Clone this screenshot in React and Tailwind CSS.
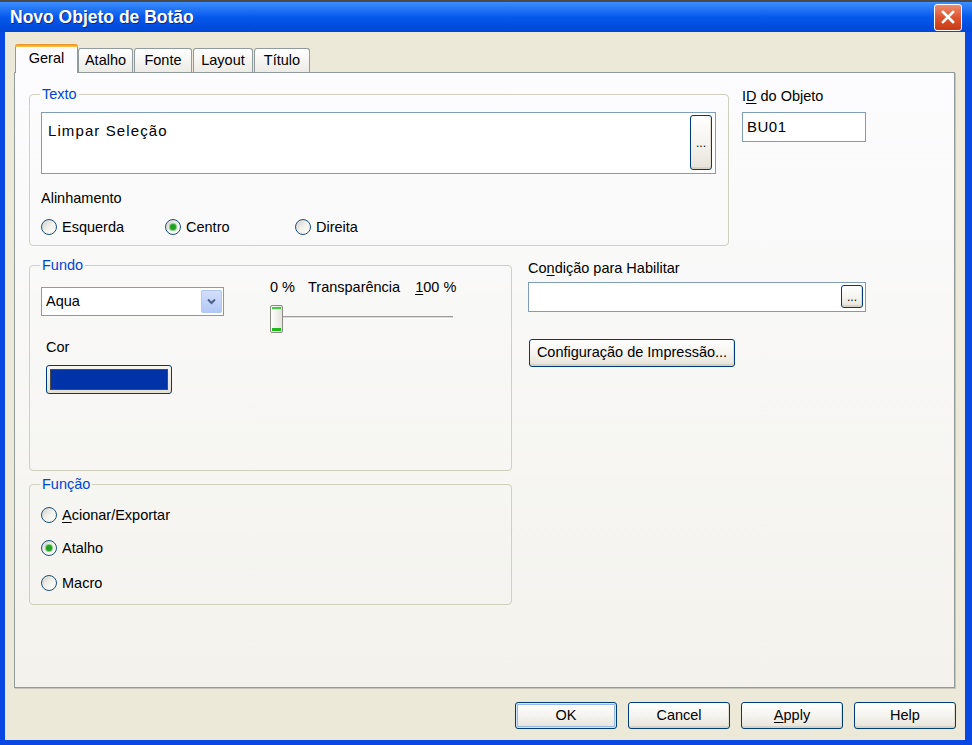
import React from "react";

function Radio({ checked }) {
  return (
    <span className="w-[16px] h-[16px] rounded-full border border-[#1C5180] bg-linear-to-br from-[#D4D1C8] via-[#F2F1EC] to-white flex items-center justify-center shrink-0">
      {checked && <span className="w-[6px] h-[6px] rounded-full bg-[#21A121] shadow-[0_0_0_1px_#7FD07F]" />}
    </span>
  );
}

function RadioItem({ checked, children, className = "" }) {
  return (
    <div className={`flex items-center gap-[5px] h-[16px] leading-[16px] ${className}`}>
      <Radio checked={checked} />
      <span>{children}</span>
    </div>
  );
}

function XPButton({ children, className = "", def = false }) {
  return (
    <div
      className={`flex items-center justify-center rounded-[3px] border border-[#003C74] bg-linear-to-b from-white via-[#F5F4EF] to-[#E6E3D9] text-black ${
        def
          ? "shadow-[inset_0_0_0_1px_#CEE7FF,inset_0_0_0_2px_#98B8EA]"
          : "shadow-[inset_0_-2px_0_#D8D2C6,inset_-1px_0_0_#E2DED3]"
      } ${className}`}
    >
      {children}
    </div>
  );
}

function Group({ label, className = "", children }) {
  return (
    <fieldset className={`border border-[#D0D0BF] rounded-[4px] ${className}`}>
      <legend className="ml-[-1px] px-[2px] leading-[16px] text-[#0046D5]">{label}</legend>
      {children}
    </fieldset>
  );
}

function Tab({ children, selected, className = "" }) {
  if (selected) {
    return (
      <div
        className={`relative z-10 mb-[-1px] h-[29px] flex items-center justify-center rounded-t-[3px] border-x border-[#919B9C] bg-[#FCFCFE] ${className}`}
      >
        <div className="absolute left-[-1px] right-[-1px] top-0 h-[3px] rounded-t-[3px] bg-linear-to-b from-[#E68B2C] to-[#FFC73C]" />
        <span className="mt-[1px]">{children}</span>
      </div>
    );
  }
  return (
    <div
      className={`h-[24px] flex items-center justify-center rounded-t-[3px] border border-b-0 border-[#919B9C] bg-linear-to-b from-white to-[#ECEBE5] ${className}`}
    >
      <span className="mt-[1px]">{children}</span>
    </div>
  );
}

export default function App() {
  return (
    <div className="w-[972px] h-[745px] bg-[#0A48E4] flex flex-col overflow-hidden font-['Liberation_Sans',Arial,sans-serif] text-[14.5px] text-black">
      {/* Title bar */}
      <div className="h-[32px] shrink-0 border-t-2 border-[#4A4A4A] bg-linear-to-b from-[#3C8DFD] via-[#0558EC] to-[#0047D6] flex items-center justify-between pl-[10px] pr-[10px]">
        <span className="text-white font-bold text-[17.5px] leading-[20px] [text-shadow:1px_1px_0_#0F2A8A]">
          Novo Objeto de Botão
        </span>
        <div className="w-[28px] h-[27px] rounded-[3px] border border-white bg-linear-to-b from-[#EB8B6D] via-[#DD5430] to-[#C83A12] flex items-center justify-center">
          <svg width="16" height="16" viewBox="0 0 16 16">
            <path d="M3 3 L13 13 M13 3 L3 13" stroke="white" strokeWidth="2.6" strokeLinecap="square" />
          </svg>
        </div>
      </div>

      {/* Body */}
      <div className="flex-1 flex flex-col bg-[#ECE9D8] ml-[5px] mr-[7px] mb-[5px]">
        {/* Tabs */}
        <div className="mt-[12px] h-[28px] pl-[10px] flex items-end">
          <Tab selected className="w-[63px]">Geral</Tab>
          <Tab className="w-[55px]">Atalho</Tab>
          <Tab className="w-[58px] ml-[1px]">Fonte</Tab>
          <Tab className="w-[60px] ml-[1px]">Layout</Tab>
          <Tab className="w-[56px] ml-[1px]">Título</Tab>
        </div>

        {/* Panel */}
        <div className="ml-[9px] w-[941px] h-[616px] border border-[#919B9C] bg-linear-to-b from-[#FCFCFE] to-[#F3F2EC] shadow-[1px_1px_0_#C8C6BA] flex flex-col">
          {/* Row 1 */}
          <div className="mt-[13px] pl-[14px] flex items-start">
            <Group label="Texto" className="w-[700px] h-[160px] px-[11px]">
              <div className="mt-[10px] h-[62px] w-[675px] border border-[#7F9DB9] bg-white flex justify-between">
                <span className="ml-[6px] mt-[9px] text-[15px] leading-[18px] tracking-[1.1px]">Limpar Seleção</span>
                <XPButton className="w-[22px] h-[55px] mt-[2px] mr-[3px] text-[12px] leading-[12px]">...</XPButton>
              </div>
              <div className="mt-[16px] leading-[16px] h-[16px]">Alinhamento</div>
              <div className="mt-[13px] flex">
                <RadioItem className="w-[124px]">Esquerda</RadioItem>
                <RadioItem checked className="w-[130px]">Centro</RadioItem>
                <RadioItem>Direita</RadioItem>
              </div>
            </Group>

            <div className="ml-[13px] flex flex-col">
              <div className="mt-[2px] h-[16px] leading-[16px]">
                I<span className="underline underline-offset-2">D</span> do Objeto
              </div>
              <div className="mt-[8px] w-[124px] h-[30px] border border-[#7F9DB9] bg-white flex items-center pl-[4px] text-[15px] tracking-[0.5px]">
                BU01
              </div>
            </div>
          </div>

          {/* Row 2 */}
          <div className="mt-[11px] pl-[14px] flex items-start">
            <div className="w-[483px] flex flex-col">
              <Group label="Fundo" className="h-[214px] px-[11px]">
                <div className="flex items-start">
                  <div className="mt-[14px] flex flex-col">
                    <div className="w-[183px] h-[29px] border border-[#7F9DB9] bg-white flex items-center justify-between">
                      <span className="ml-[4px]">Aqua</span>
                      <div className="w-[21px] h-[23px] mr-[1px] rounded-[2px] border border-[#B1C7F5] bg-linear-to-b from-[#D3DFFB] to-[#B3C8F7] flex items-center justify-center">
                        <svg width="11" height="11" viewBox="0 0 11 11">
                          <path d="M2 3.5 L5.5 7 L9 3.5" fill="none" stroke="#4D6185" strokeWidth="2" />
                        </svg>
                      </div>
                    </div>
                    <div className="mt-[23px] ml-[5px] h-[16px] leading-[16px]">Cor</div>
                    <div className="mt-[10px] ml-[5px] w-[126px] h-[29px] rounded-[3px] border border-[#003C74] bg-linear-to-b from-[#F6F5F1] to-[#E2DFD5] p-[3px]">
                      <div className="w-full h-full border border-[#4B4B4B] bg-[#0033A8]" />
                    </div>
                  </div>

                  <div className="ml-[46px] mt-[6px] flex flex-col">
                    <div className="flex h-[16px] leading-[16px]">
                      <span>0 %</span>
                      <span className="ml-[13px]">Transparência</span>
                      <span className="ml-[15px]">
                        <span className="underline underline-offset-2">1</span>00 %
                      </span>
                    </div>
                    <div className="mt-[10px] w-[183px] h-[28px] flex items-center">
                      <div className="w-[13px] h-[28px] rounded-[2px] border border-[#8C8C86] bg-linear-to-r from-white to-[#E4E3DC] flex flex-col justify-between px-[1px] py-[1px]">
                        <div className="h-[2px] bg-[#3DD23A]" />
                        <div className="h-[3px] bg-[#21B81E]" />
                      </div>
                      <div className="flex-1 mt-[-3px] h-[3px] border-t border-[#9D9C99] border-b border-b-white bg-[#DCDAD2]" />
                    </div>
                  </div>
                </div>
              </Group>

              <Group label="Função" className="mt-[5px] h-[129px] px-[11px]">
                <RadioItem className="mt-[15px]">
                  <span className="underline underline-offset-2">A</span>cionar/Exportar
                </RadioItem>
                <RadioItem checked className="mt-[17px]">Atalho</RadioItem>
                <RadioItem className="mt-[19px]">Macro</RadioItem>
              </Group>
            </div>

            <div className="ml-[16px] w-[338px] flex flex-col">
              <div className="mt-[3px] h-[16px] leading-[16px]">
                Co<span className="underline underline-offset-2">n</span>dição para Habilitar
              </div>
              <div className="mt-[6px] h-[30px] border border-[#7F9DB9] bg-white flex items-start justify-end">
                <XPButton className="w-[22px] h-[23px] mt-[2px] mr-[2px] text-[12px] leading-[12px]">...</XPButton>
              </div>
              <XPButton className="mt-[27px] ml-[1px] w-[206px] h-[28px]">Configuração de Impressão...</XPButton>
            </div>
          </div>
        </div>

        {/* Bottom buttons */}
        <div className="mt-[14px] pr-[9px] flex justify-end gap-[11px]">
          <XPButton def className="w-[102px] h-[27px]">OK</XPButton>
          <XPButton className="w-[102px] h-[27px]">Cancel</XPButton>
          <XPButton className="w-[102px] h-[27px]">
            <span>
              <span className="underline underline-offset-2">A</span>pply
            </span>
          </XPButton>
          <XPButton className="w-[102px] h-[27px]">Help</XPButton>
        </div>
      </div>
    </div>
  );
}
